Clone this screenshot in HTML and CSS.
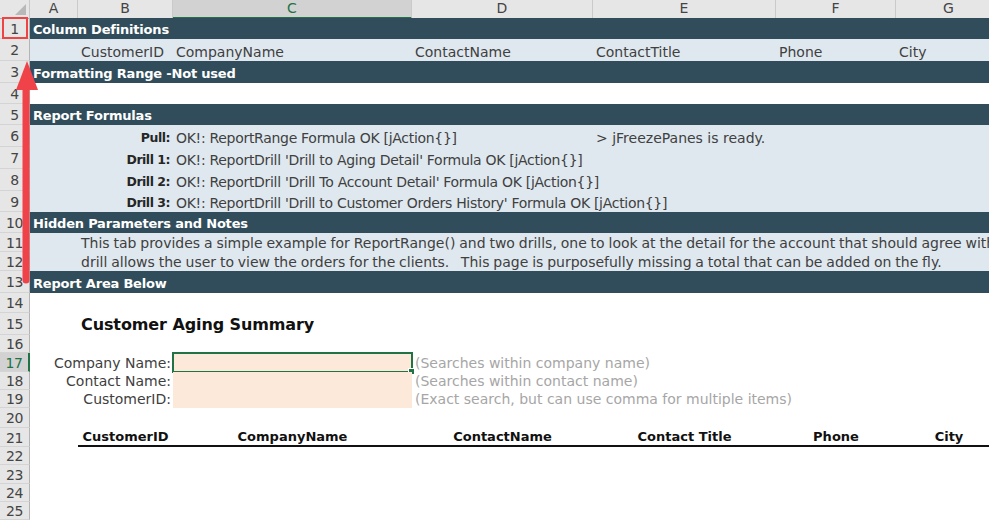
FILE: index.html
```html
<!DOCTYPE html>
<html lang="en">
<head>
<meta charset="utf-8">
<title>Customer Aging Summary</title>
<link rel="stylesheet" href="styles.css">
</head>
<body>
<div class="sheet">
  <div class="row colhead">
    <div class="corner"><span class="tri"></span></div>
    <div class="ch">A</div>
    <div class="ch">B</div>
    <div class="ch sel">C</div>
    <div class="ch">D</div>
    <div class="ch">E</div>
    <div class="ch">F</div>
    <div class="ch">G</div>
  </div>

  <div class="row r21 dark"><div class="rh">1</div><div class="c wide title">Column Definitions</div></div>
  <div class="row r22 light">
    <div class="rh">2</div><div class="c"></div>
    <div class="c">CustomerID</div><div class="c">CompanyName</div><div class="c">ContactName</div>
    <div class="c">ContactTitle</div><div class="c">Phone</div><div class="c">City</div>
  </div>
  <div class="row r22 dark"><div class="rh">3</div><div class="c wide title">Formatting Range -Not used</div></div>
  <div class="row r21"><div class="rh">4</div></div>
  <div class="row r21 dark"><div class="rh">5</div><div class="c wide title">Report Formulas</div></div>
  <div class="row r22 light">
    <div class="rh">6</div><div class="c"></div><div class="c lbl">Pull:</div>
    <div class="c span2 msg">OK!: ReportRange Formula OK [jAction{}]</div>
    <div class="c span3">&gt; jFreezePanes is ready.</div>
  </div>
  <div class="row r22 light">
    <div class="rh">7</div><div class="c"></div><div class="c lbl">Drill 1:</div>
    <div class="c rest msg">OK!: ReportDrill 'Drill to Aging Detail' Formula OK [jAction{}]</div>
  </div>
  <div class="row r22 light">
    <div class="rh">8</div><div class="c"></div><div class="c lbl">Drill 2:</div>
    <div class="c rest msg">OK!: ReportDrill 'Drill To Account Detail' Formula OK [jAction{}]</div>
  </div>
  <div class="row r21 light">
    <div class="rh">9</div><div class="c"></div><div class="c lbl">Drill 3:</div>
    <div class="c rest msg">OK!: ReportDrill 'Drill to Customer Orders History' Formula OK [jAction{}]</div>
  </div>
  <div class="row r21 dark"><div class="rh">10</div><div class="c wide title">Hidden Parameters and Notes</div></div>
  <div class="row r19 light">
    <div class="rh">11</div><div class="c"></div>
    <div class="c restb note">This tab provides a simple example for ReportRange() and two drills, one to look at the detail for the account that should agree with the total</div>
  </div>
  <div class="row r19 light">
    <div class="rh">12</div><div class="c"></div>
    <div class="c restb note">drill allows the user to view the orders for the clients.&nbsp;&nbsp; This page is purposefully missing a total that can be added on the fly.</div>
  </div>
  <div class="row r22 dark"><div class="rh">13</div><div class="c wide title">Report Area Below</div></div>
  <div class="row r20"><div class="rh">14</div></div>
  <div class="row r22">
    <div class="rh">15</div><div class="c"></div>
    <div class="c restb heading">Customer Aging Summary</div>
  </div>
  <div class="row r18"><div class="rh">16</div></div>
  <div class="row r19">
    <div class="rh selrow">17</div><div class="c"></div>
    <div class="c field">Company Name:</div>
    <div class="c input active"><span class="handle"></span></div>
    <div class="c hint rest3">(Searches within company name)</div>
  </div>
  <div class="row r18">
    <div class="rh">18</div><div class="c"></div>
    <div class="c field">Contact Name:</div>
    <div class="c input"></div>
    <div class="c hint rest3">(Searches within contact name)</div>
  </div>
  <div class="row r18">
    <div class="rh">19</div><div class="c"></div>
    <div class="c field">CustomerID:</div>
    <div class="c input"></div>
    <div class="c hint rest3">(Exact search, but can use comma for multiple items)</div>
  </div>
  <div class="row r20"><div class="rh">20</div></div>
  <div class="row r19 thead">
    <div class="rh">21</div><div class="c"></div>
    <div class="c th">CustomerID</div><div class="c th">CompanyName</div><div class="c th">ContactName</div>
    <div class="c th">Contact Title</div><div class="c th">Phone</div><div class="c th">City</div>
  </div>
  <div class="row r18"><div class="rh">22</div></div>
  <div class="row r19"><div class="rh">23</div></div>
  <div class="row r18"><div class="rh">24</div></div>
  <div class="row r18"><div class="rh">25</div></div>

  <div class="mark"></div>
  <svg class="arrow" width="40" height="300" viewBox="0 0 40 300" aria-hidden="true">
    <line x1="26" y1="280" x2="26" y2="84" stroke="#ef4349" stroke-width="7" stroke-linecap="round"/>
    <polygon points="27,61 16,90 38,90" fill="#ef4349"/>
  </svg>
</div>
</body>
</html>
```

FILE: styles.css
```css
html, body {
  margin: 0;
  padding: 0;
  background: #ffffff;
}
body {
  width: 989px;
  height: 520px;
  overflow: hidden;
  font-family: "DejaVu Sans", Verdana, sans-serif;
  font-size: 14px;
  color: #404040;
}
.sheet {
  position: relative;
  display: flex;
  flex-direction: column;
  width: 989px;
}
.row {
  display: grid;
  grid-template-columns: 30px 48px 95px 239px 181px 183px 120px 106px;
  width: 1002px;
}
.r18 { height: 18px; }
.r19 { height: 19px; }
.r20 { height: 20px; }
.r21 { height: 21px; }
.r22 { height: 22px; }

.colhead {
  height: 18px;
  background: #e6e6e6;
}
.corner {
  position: relative;
  background: #e6e6e6;
  border-right: 1px solid #c8c8c8;
  border-bottom: 1px solid #ababab;
  box-sizing: border-box;
}
.tri {
  position: absolute;
  right: 3px;
  bottom: 3px;
  width: 0;
  height: 0;
  border-left: 11px solid transparent;
  border-bottom: 11px solid #b8b8b8;
}
.ch {
  box-sizing: border-box;
  border-right: 1px solid #cacaca;
  border-bottom: 1px solid #ababab;
  text-align: center;
  font-size: 14px;
  line-height: 17px;
  color: #444444;
}
.ch.sel {
  background: #d2d2d2;
  color: #217346;
  border-bottom: 2px solid #217346;
}

.rh {
  box-sizing: border-box;
  background: #e6e6e6;
  border-right: 1px solid #b4b4b4;
  border-bottom: 1px solid #d4d4d4;
  text-align: center;
  color: #444444;
  font-size: 14px;
  display: flex;
  align-items: center;
  justify-content: center;
  padding-top: 1px;
  letter-spacing: -0.5px;
}
.rh.selrow {
  background: #d2d2d2;
  color: #217346;
  border-right: 2px solid #217346;
}

.c {
  white-space: nowrap;
  padding: 0 3px 1px;
  display: flex;
  align-items: flex-end;
  line-height: 16px;
  min-width: 0;
  box-sizing: border-box;
}
.dark { background: #314d5b; }
.light { background: #dfe8ef; }

.wide { grid-column: 2 / -1; }
.title {
  color: #ffffff;
  font-weight: bold;
  font-size: 13px;
  letter-spacing: -0.2px;
}
.lbl {
  justify-content: flex-end;
  font-weight: bold;
  color: #262626;
  font-size: 12.5px;
  letter-spacing: -0.5px;
  padding-right: 3px;
}
.msg { letter-spacing: -0.3px; }
.span2 { grid-column: span 2; }
.span3 { grid-column: span 3; }
.rest { grid-column: 4 / -1; }
.restb { grid-column: 3 / -1; overflow: hidden; }
.rest3 { grid-column: 5 / -1; }
.note { word-spacing: -0.6px; }

.heading {
  color: #111111;
  font-weight: bold;
  font-size: 16px;
  line-height: 19px;
  letter-spacing: -0.1px;
  padding-left: 3px;
}
.field {
  justify-content: flex-end;
  color: #404040;
  padding-right: 2px;
}
.input {
  background: #fde9d9;
  position: relative;
}
.input.active {
  border: 2px solid #217346;
  margin: -1px;
}
.handle {
  position: absolute;
  right: -4px;
  bottom: -4px;
  width: 5px;
  height: 5px;
  background: #217346;
  border: 1px solid #ffffff;
}
.hint {
  color: #a6a6a6;
}
.th {
  justify-content: center;
  font-weight: bold;
  color: #111111;
  font-size: 13px;
  padding-bottom: 0;
  border-bottom: 2px solid #111111;
}

.mark {
  position: absolute;
  left: 2px;
  top: 17px;
  width: 26px;
  height: 22px;
  box-sizing: border-box;
  border: 2px solid #ee4444;
}
.arrow {
  position: absolute;
  left: 0;
  top: 0;
}
```
